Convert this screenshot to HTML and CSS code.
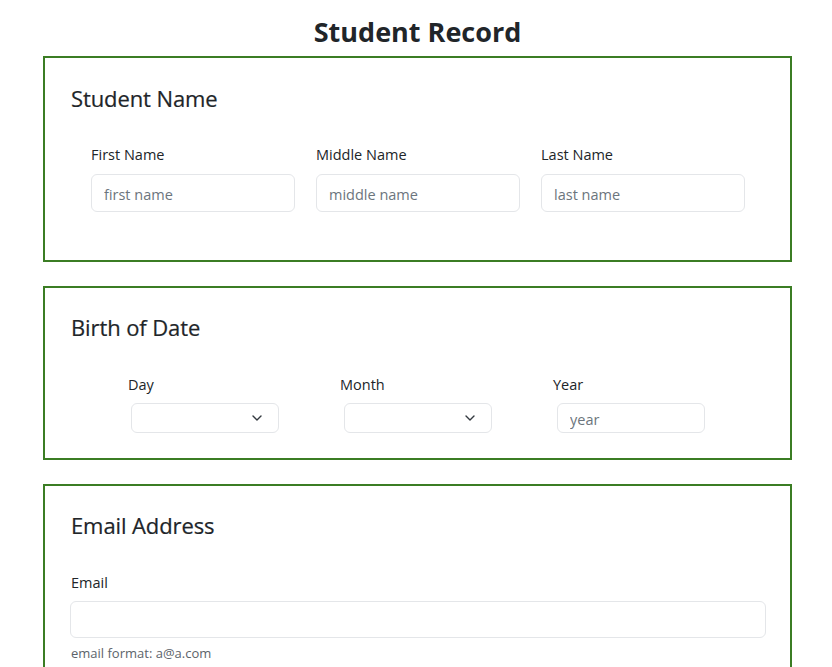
FILE: index.html
```html
<!DOCTYPE html>
<html lang="en">
<head>
<meta charset="utf-8">
<title>Student Record</title>
<link rel="stylesheet" href="styles.css">
</head>
<body>
<main class="page">
  <h1 class="title">Student Record</h1>

  <section class="box box-name">
    <h2 class="box-title">Student Name</h2>
    <div class="name-row">
      <div class="field">
        <label class="label" for="fn">First Name</label>
        <input class="control" id="fn" type="text" placeholder="first name">
      </div>
      <div class="field">
        <label class="label" for="mn">Middle Name</label>
        <input class="control" id="mn" type="text" placeholder="middle name">
      </div>
      <div class="field">
        <label class="label" for="ln">Last Name</label>
        <input class="control" id="ln" type="text" placeholder="last name">
      </div>
    </div>
  </section>

  <section class="box box-date">
    <h2 class="box-title">Birth of Date</h2>
    <div class="date-row">
      <div class="dfield">
        <label class="label" for="day">Day</label>
        <div class="select">
          <svg class="chev" viewBox="0 0 10 6" width="10" height="6"><path d="M1 1l4 4 4-4" fill="none" stroke="#343a40" stroke-width="1.4" stroke-linecap="round" stroke-linejoin="round"/></svg>
        </div>
      </div>
      <div class="dfield">
        <label class="label" for="month">Month</label>
        <div class="select">
          <svg class="chev" viewBox="0 0 10 6" width="10" height="6"><path d="M1 1l4 4 4-4" fill="none" stroke="#343a40" stroke-width="1.4" stroke-linecap="round" stroke-linejoin="round"/></svg>
        </div>
      </div>
      <div class="dfield">
        <label class="label" for="year">Year</label>
        <input class="control small" id="year" type="text" placeholder="year">
      </div>
    </div>
  </section>

  <section class="box box-email">
    <h2 class="box-title">Email Address</h2>
    <label class="label" for="email">Email</label>
    <input class="control wide" id="email" type="email">
    <p class="hint">email format: a@a.com</p>
  </section>
</main>
</body>
</html>
```

FILE: styles.css
```css
* { box-sizing: border-box; }
html, body { margin: 0; padding: 0; background: #fff; }
body {
  font-family: "Open Sans", "Noto Sans", sans-serif;
  color: #212529;
  overflow: hidden;
}
.page {
  width: 749px;
  margin-left: 43px;
  padding-top: 12px;
}
.title {
  margin: 0;
  text-align: center;
  font-size: 27px;
  line-height: 40px;
  font-weight: 700;
  height: 44px;
}
.box {
  border: 2px solid #3b7d24;
  padding: 26px 25px 0 26px;
  margin-bottom: 24px;
}
.box-title {
  margin: 0;
  font-size: 22px;
  line-height: 28px;
  font-weight: 500;
  letter-spacing: -0.1px;
  -webkit-text-stroke: 0.2px #212529;
}
.label {
  display: block;
  font-size: 14.5px;
  line-height: 24px;
}
.control {
  display: block;
  border: 1px solid #e4e6e9;
  border-radius: 6px;
  background: #fff;
  font-family: inherit;
  font-size: 14.5px;
  color: #212529;
  padding: 0 12px;
  outline: none;
}
.control::placeholder { color: #6c757d; }

/* Student name */
.box-name { height: 206px; }
.name-row {
  display: flex;
  gap: 21px;
  padding-left: 20px;
  margin-top: 31px;
}
.name-row .field { width: 204px; }
.name-row .control { width: 204px; height: 38px; margin-top: 7px; padding-top: 2px; }

/* Birth date */
.box-date { height: 174px; padding-top: 25px; }
.date-row {
  display: grid;
  grid-template-columns: 212px 213px 213px;
  padding-left: 57px;
  margin-top: 32px;
}
.date-row .label { line-height: 23px; }
.date-row .dfield:nth-child(1) .select { margin-left: 3px; }
.date-row .dfield:nth-child(2) .select { margin-left: 4px; }
.date-row .dfield:nth-child(3) .control { margin-left: 4px; }
.select {
  position: relative;
  width: 148px;
  height: 30px;
  margin-top: 7px;
  border: 1px solid #e4e6e9;
  border-radius: 6px;
}
.chev {
  position: absolute;
  right: 16px;
  top: 11px;
}
.control.small { width: 148px; height: 30px; margin-top: 7px; padding-top: 2px; }

/* Email */
.box-email { padding-top: 25px; height: 240px; }
.box-email .label { margin-top: 32px; line-height: 23px; }
.control.wide { width: 696px; height: 37px; margin-top: 7px; margin-left: -1px; }
.hint {
  margin: 5px 0 0;
  font-size: 13px;
  line-height: 20px;
  color: #5c636a;
}
```
